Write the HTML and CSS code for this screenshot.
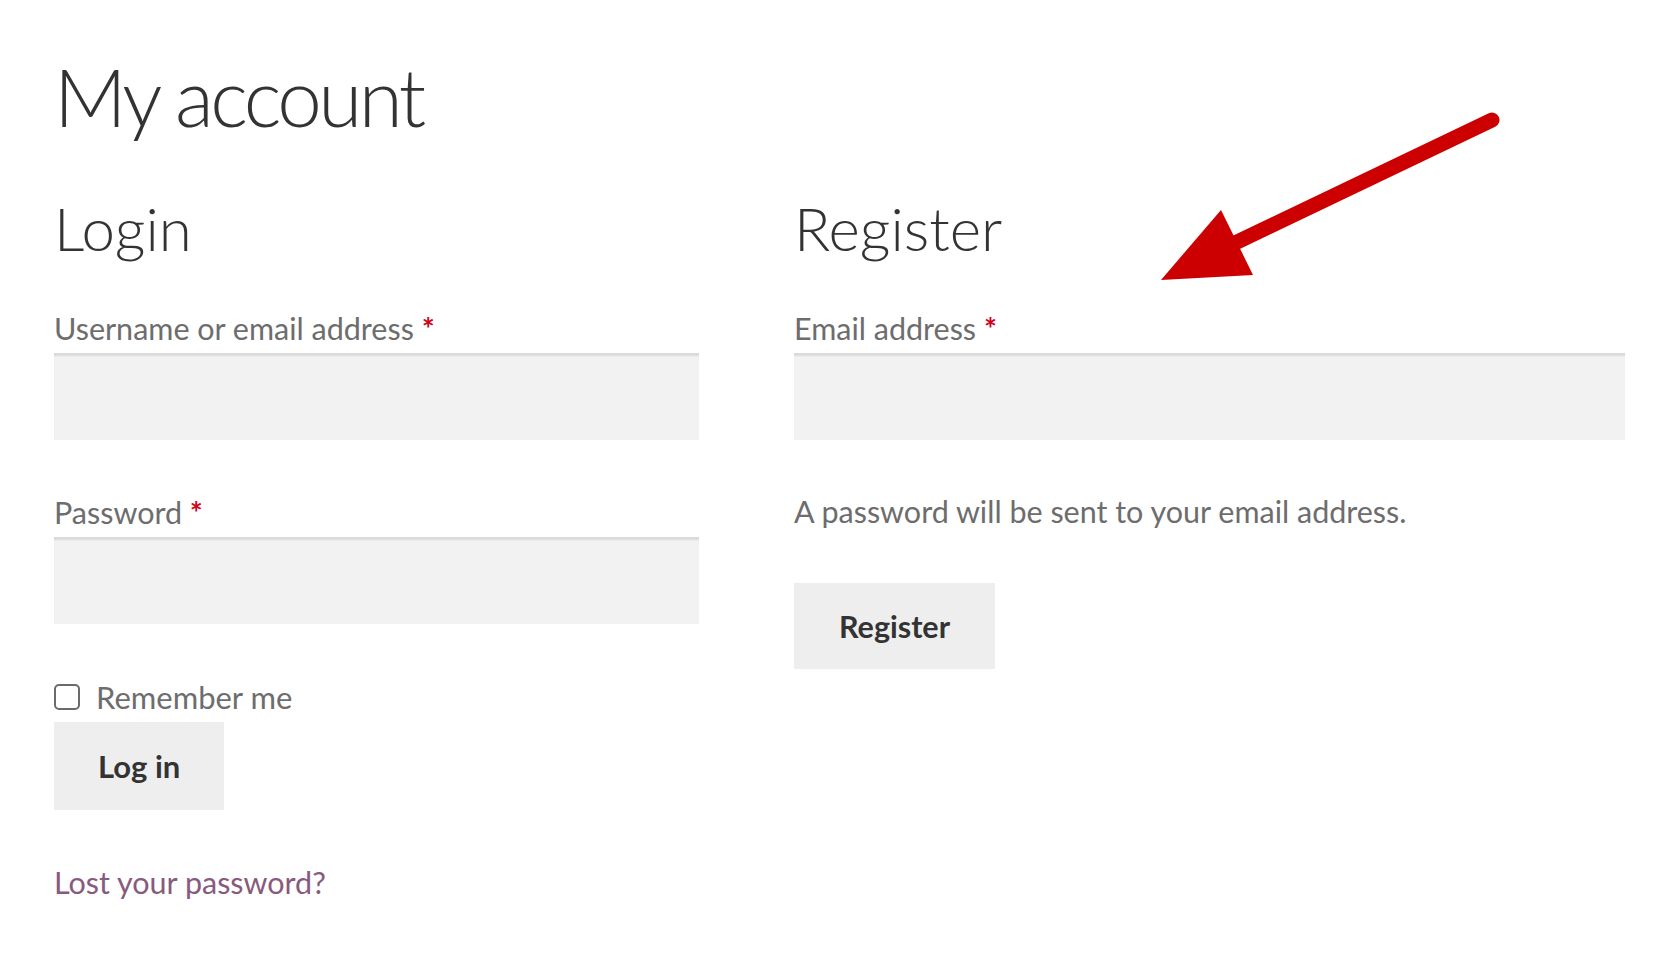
FILE: index.html
```html
<!DOCTYPE html>
<html lang="en">
<head>
    <meta charset="UTF-8">
    <meta name="viewport" content="width=device-width, initial-scale=1.0">
    <title>My account</title>
    <link rel="stylesheet" href="styles.css">
</head>
<body>
    <h1 class="page-title">My account</h1>

    <div class="columns">
        <div class="col col-login">
            <h2>Login</h2>
            <form class="account-form">
                <div class="form-row">
                    <label for="username">Username or email address <span class="required">*</span></label>
                    <input type="text" id="username" name="username">
                </div>
                <div class="form-row">
                    <label for="password">Password <span class="required">*</span></label>
                    <input type="password" id="password" name="password">
                </div>
                <label class="remember">
                    <input type="checkbox" class="checkbox" name="rememberme">
                    <span>Remember me</span>
                </label>
                <button class="button" type="submit">Log in</button>
                <p class="lost-password"><a href="#">Lost your password?</a></p>
            </form>
        </div>

        <div class="col col-register">
            <h2>Register</h2>
            <form class="account-form">
                <div class="form-row">
                    <label for="reg_email">Email address <span class="required">*</span></label>
                    <input type="email" id="reg_email" name="email">
                </div>
                <p class="note">A password will be sent to your email address.</p>
                <button class="button button-register" type="submit">Register</button>
            </form>
        </div>
    </div>

    <!-- annotation arrow drawn over the page -->
    <svg class="arrow" width="380" height="200" viewBox="0 0 380 200">
        <line x1="352" y1="20" x2="95" y2="143" stroke="#cc0000" stroke-width="15" stroke-linecap="round"/>
        <polygon points="21,180 81,110 113,175" fill="#cc0000"/>
    </svg>
</body>
</html>
```

FILE: styles.css
```css
body {
    font-family: Lato, "Open Sans", sans-serif;
    margin: 0;
    padding: 56px 0 0 54px;
    color: #333;
    background: #fff;
    position: relative;
}
h1, h2, p {
    margin: 0;
}
.page-title {
    font-size: 80px;
    font-weight: 300;
    line-height: 80px;
    letter-spacing: -3.5px;
}
.columns {
    display: grid;
    grid-template-columns: 645px 831px;
    column-gap: 95px;
    margin-top: 62px;
}
h2 {
    font-size: 60px;
    font-weight: 300;
    line-height: 60px;
    margin-bottom: 51px;
}
.account-form {
    display: flex;
    flex-direction: column;
    align-items: flex-start;
}
.form-row {
    width: 100%;
    margin-bottom: 53px;
}
.form-row label {
    display: block;
    font-size: 30.5px;
    line-height: 38px;
    color: #6d6d6d;
    margin-bottom: 6px;
}
.required {
    color: #d0021b;
    font-weight: 700;
}
.form-row input {
    display: block;
    width: 100%;
    height: 87px;
    box-sizing: border-box;
    border: 0;
    background: #f2f2f2;
    box-shadow: inset 0 4px 2px -1px rgba(0, 0, 0, 0.1);
    font-size: 29px;
    padding: 0 20px;
}
.remember {
    display: flex;
    align-items: center;
    gap: 16px;
    font-size: 31px;
    line-height: 38px;
    color: #6d6d6d;
    margin-top: 1px;
}
.checkbox {
    width: 26px;
    height: 26px;
    margin: 0;
    appearance: none;
    border: 2px solid #6b6b6b;
    border-radius: 5px;
    box-sizing: border-box;
    background: #fff;
}
.button {
    font-family: inherit;
    font-size: 31px;
    font-weight: 700;
    color: #333;
    background: #eeeeee;
    border: none;
    height: 88px;
    padding: 0 44px;
    margin-top: 6px;
    cursor: pointer;
}
.button:hover {
    background: #d5d5d5;
}
.lost-password {
    font-size: 30.5px;
    line-height: 38px;
    margin-top: 53px;
}
.lost-password a {
    color: #875a7e;
    text-decoration: none;
}
.note {
    font-size: 30.5px;
    line-height: 38px;
    color: #6d6d6d;
    margin-top: -1px;
}
.button-register {
    height: 86px;
    padding: 0 45px;
    margin-top: 53px;
    font-size: 30.5px;
}
.arrow {
    position: absolute;
    left: 1140px;
    top: 100px;
}
```
